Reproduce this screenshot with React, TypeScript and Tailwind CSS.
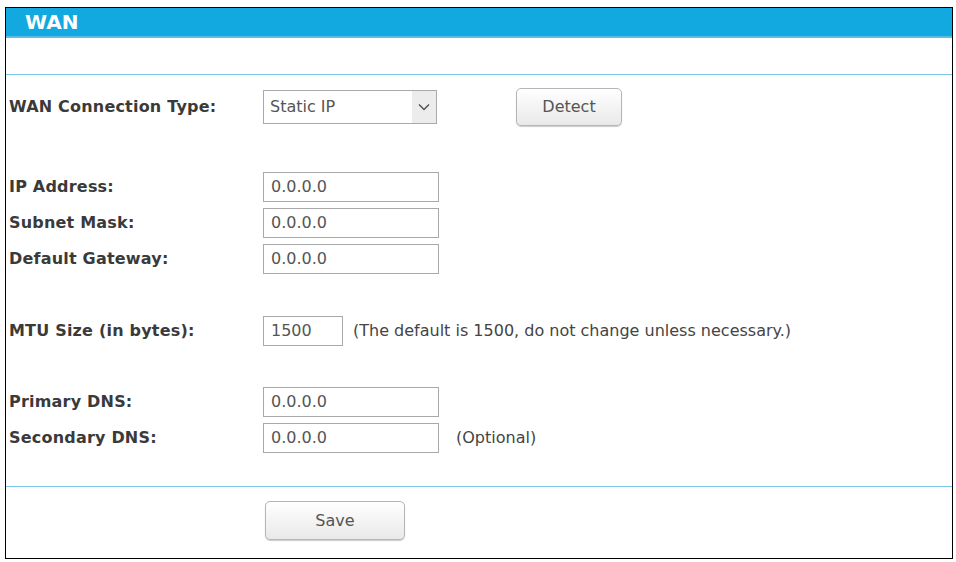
const F = { fontFamily: '"DejaVu Sans", Verdana, sans-serif' }

function Field({ value, w = 'w-[176px]' }: { value: string; w?: string }) {
  return (
    <div className={`${w} h-[30px] border border-[#a9a9a9] bg-white pl-[7px] flex items-center text-[16px] text-[#555]`}>
      {value}
    </div>
  )
}

function Row({ label, children, h = 'h-[36px]' }: { label: string; children: React.ReactNode; h?: string }) {
  return (
    <div className={`flex items-center ${h}`}>
      <div className="w-[254px] font-bold text-[16px] tracking-[0.2px] text-[#3a3a3a]">{label}</div>
      {children}
    </div>
  )
}

export default function App() {
  return (
    <div className="w-[956px] h-[562px] bg-white pt-[7px] pl-[5px]" style={F}>
      <div className="w-[948px] h-[552px] border border-black flex flex-col">
        <div className="h-[30px] bg-[#12a9e0] border-b-2 border-[#5bbde6] flex items-center pl-[19px] text-white font-bold text-[20px]">
          WAN
        </div>
        <div className="h-[37px] border-b border-[#7cc8e8]" />
        <div className="pl-[3px]">
          <div className="h-[64px] flex items-center">
            <div className="w-[254px] font-bold text-[16px] tracking-[0.2px] text-[#3a3a3a]">WAN Connection Type:</div>
            <div className="w-[174px] h-[34px] border border-[#aaa] flex items-center justify-between text-[16px] text-[#555]">
              <span className="pl-[6px]">Static IP</span>
              <span className="w-[24px] h-full bg-[#ececec] flex items-center justify-center">
                <svg width="12" height="8" viewBox="0 0 12 8"><path d="M1 1.5 6 6.5 11 1.5" fill="none" stroke="#555" strokeWidth="1.5" /></svg>
              </span>
            </div>
            <button className="ml-[79px] w-[106px] h-[38px] rounded-[5px] border border-[#b5b5b5] bg-gradient-to-b from-white to-[#e9e9e9] text-[16px] text-[#555] shadow-[0_1px_1px_#ccc]">
              Detect
            </button>
          </div>
          <div className="h-[30px]" />
          <Row label="IP Address:"><Field value="0.0.0.0" /></Row>
          <Row label="Subnet Mask:"><Field value="0.0.0.0" /></Row>
          <Row label="Default Gateway:"><Field value="0.0.0.0" /></Row>
          <div className="h-[36px]" />
          <Row label="MTU Size (in bytes):">
            <Field value="1500" w="w-[80px]" />
            <span className="ml-[10px] text-[16px] text-[#444]">(The default is 1500, do not change unless necessary.)</span>
          </Row>
          <div className="h-[35px]" />
          <Row label="Primary DNS:"><Field value="0.0.0.0" /></Row>
          <Row label="Secondary DNS:">
            <Field value="0.0.0.0" />
            <span className="ml-[17px] text-[16px] text-[#444]">(Optional)</span>
          </Row>
        </div>
        <div className="mt-[30px] border-b border-[#7cc8e8]" />
        <div className="pl-[259px] pt-[14px]">
          <button className="w-[140px] h-[39px] rounded-[5px] border border-[#b5b5b5] bg-gradient-to-b from-white to-[#e9e9e9] text-[16px] text-[#555] shadow-[0_1px_1px_#ccc]">
            Save
          </button>
        </div>
      </div>
    </div>
  )
}
